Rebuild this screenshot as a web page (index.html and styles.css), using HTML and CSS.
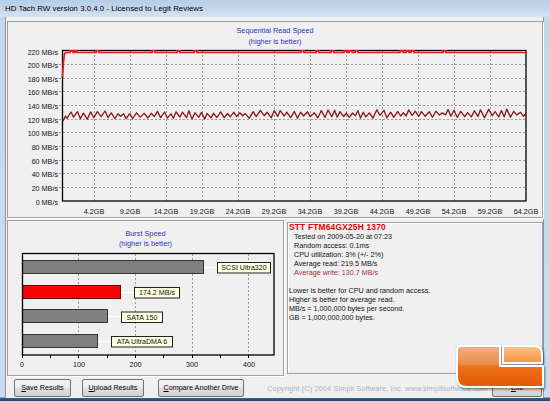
FILE: index.html
```html
<!DOCTYPE html>
<html>

<head>
    <meta content="text/html; charset=utf-8" http-equiv="Content-Type">
    <title>HD Tach RW</title>
    <link rel="stylesheet" href="styles.css">
</head>

<body>
<div class="window">
    <div class="titleBar">HD Tach RW version 3.0.4.0 - Licensed to Legit Reviews</div>
    <div class="client">
        <div class="panel readPanel">
            <div class="chartTitle">Sequential Read Speed<br>(higher is better)</div>
            <svg class="chart" width="534" height="169" viewBox="8 47 534 169">
                <g class="grid">
                    <line x1="59" y1="64.5" x2="526" y2="64.5"/>
                    <line x1="59" y1="78.5" x2="526" y2="78.5"/>
                    <line x1="59" y1="91.5" x2="526" y2="91.5"/>
                    <line x1="59" y1="105.5" x2="526" y2="105.5"/>
                    <line x1="59" y1="119.5" x2="526" y2="119.5"/>
                    <line x1="59" y1="132.5" x2="526" y2="132.5"/>
                    <line x1="59" y1="146.5" x2="526" y2="146.5"/>
                    <line x1="59" y1="160.5" x2="526" y2="160.5"/>
                    <line x1="59" y1="173.5" x2="526" y2="173.5"/>
                    <line x1="59" y1="187.5" x2="526" y2="187.5"/>
                    <line x1="94.5" y1="51" x2="94.5" y2="201"/>
                    <line x1="130.5" y1="51" x2="130.5" y2="201"/>
                    <line x1="166.5" y1="51" x2="166.5" y2="201"/>
                    <line x1="202.5" y1="51" x2="202.5" y2="201"/>
                    <line x1="238.5" y1="51" x2="238.5" y2="201"/>
                    <line x1="274.5" y1="51" x2="274.5" y2="201"/>
                    <line x1="310.5" y1="51" x2="310.5" y2="201"/>
                    <line x1="346.5" y1="51" x2="346.5" y2="201"/>
                    <line x1="382.5" y1="51" x2="382.5" y2="201"/>
                    <line x1="418.5" y1="51" x2="418.5" y2="201"/>
                    <line x1="454.5" y1="51" x2="454.5" y2="201"/>
                    <line x1="490.5" y1="51" x2="490.5" y2="201"/>
                </g>
                <rect class="plotBox" x="62.5" y="50.5" width="463.5" height="150.5"/>
                <g class="yLabels">
                    <text x="58" y="54.6">220 MB/s</text>
                    <text x="58" y="68.1">200 MB/s</text>
                    <text x="58" y="82.1">180 MB/s</text>
                    <text x="58" y="95.1">160 MB/s</text>
                    <text x="58" y="109.1">140 MB/s</text>
                    <text x="58" y="123.1">120 MB/s</text>
                    <text x="58" y="136.1">100 MB/s</text>
                    <text x="58" y="150.1">80 MB/s</text>
                    <text x="58" y="164.1">60 MB/s</text>
                    <text x="58" y="177.1">40 MB/s</text>
                    <text x="58" y="191.1">20 MB/s</text>
                    <text x="58" y="204.6">0 MB/s</text>
                </g>
                <g class="xLabels">
                    <text x="94" y="213.6">4.2GB</text>
                    <text x="130" y="213.6">9.2GB</text>
                    <text x="166" y="213.6">14.2GB</text>
                    <text x="202" y="213.6">19.2GB</text>
                    <text x="238" y="213.6">24.2GB</text>
                    <text x="274" y="213.6">29.2GB</text>
                    <text x="310" y="213.6">34.2GB</text>
                    <text x="346" y="213.6">39.2GB</text>
                    <text x="382" y="213.6">44.2GB</text>
                    <text x="418" y="213.6">49.2GB</text>
                    <text x="454" y="213.6">54.2GB</text>
                    <text x="490" y="213.6">59.2GB</text>
                    <text x="526" y="213.6">64.2GB</text>
                </g>
                <polyline class="readLine" points="62.5,77 63.5,62 64.5,53.5 66,52.5 70,52.5 70,50.8 73,50.8 73,52.5 75,52.5 75,50.8 77,50.8 77,52.5 96,52.5 96,50.8 99,50.8 99,52.5 152,52.5 152,50.8 155,50.8 155,52.5 177,52.5 177,50.8 180,50.8 180,52.5 194,52.5 194,50.8 197,50.8 197,52.5 301,52.5 301,50.8 304,50.8 304,52.5 316,52.5 316,50.8 319,50.8 319,52.5 331,52.5 331,50.8 334,50.8 334,52.5 344,52.5 344,50.8 347,50.8 347,52.5 349,52.5 349,50.8 352,50.8 352,52.5 355,52.5 355,50.8 358,50.8 358,52.5 400,52.5 400,50.8 403,50.8 403,52.5 406,52.5 406,50.8 409,50.8 409,52.5 411,52.5 411,50.8 414,50.8 414,52.5 443,52.5 443,50.8 446,50.8 446,52.5 526,52.5"/>
                <polyline id="writeLine" class="writeLine" points="63,121 526,114"/>
            </svg>
        </div>

        <div class="lowerRow">
            <div class="panel burstPanel">
                <div class="chartTitle">Burst Speed<br>(higher is better)</div>
                <svg class="chart" width="275" height="125" viewBox="8 249 275 125">
                    <g class="grid">
                        <line x1="78.5" y1="254" x2="78.5" y2="355"/>
                        <line x1="135.5" y1="254" x2="135.5" y2="355"/>
                        <line x1="192.5" y1="254" x2="192.5" y2="355"/>
                        <line x1="248.5" y1="254" x2="248.5" y2="355"/>
                    </g>
                    <g class="connectors">
                        <line x1="203" y1="267.5" x2="217" y2="267.5"/>
                        <line x1="120" y1="292.5" x2="134" y2="292.5"/>
                        <line x1="107" y1="316.5" x2="121" y2="316.5"/>
                        <line x1="97" y1="341.5" x2="111" y2="341.5"/>
                    </g>
                    <rect class="bar" x="22.5" y="260.5" width="181" height="13"/>
                    <rect class="bar current" x="22.5" y="285.5" width="98" height="13"/>
                    <rect class="bar" x="22.5" y="309.5" width="85" height="13"/>
                    <rect class="bar" x="22.5" y="334.5" width="75" height="13"/>
                    <rect class="plotBox" x="22.5" y="253.5" width="251.5" height="101.5"/>
                    <g class="ticks">
                        <line x1="22.5" y1="355" x2="22.5" y2="358"/>
                        <line x1="50.5" y1="355" x2="50.5" y2="358"/>
                        <line x1="78.5" y1="355" x2="78.5" y2="358"/>
                        <line x1="107.5" y1="355" x2="107.5" y2="358"/>
                        <line x1="135.5" y1="355" x2="135.5" y2="358"/>
                        <line x1="163.5" y1="355" x2="163.5" y2="358"/>
                        <line x1="192.5" y1="355" x2="192.5" y2="358"/>
                        <line x1="220.5" y1="355" x2="220.5" y2="358"/>
                        <line x1="248.5" y1="355" x2="248.5" y2="358"/>
                    </g>
                    <g class="tags">
                        <rect x="217.5" y="262.5" width="53" height="10.5"/>
                        <text x="244" y="270.4">SCSI Ultra320</text>
                        <rect x="134.5" y="287.5" width="45" height="10.5"/>
                        <text x="157" y="295.4">174.2 MB/s</text>
                        <rect x="121.5" y="312" width="41" height="10.5"/>
                        <text x="142" y="319.9">SATA 150</text>
                        <rect x="111.5" y="336.5" width="61" height="10.5"/>
                        <text x="142" y="344.4">ATA UltraDMA 6</text>
                    </g>
                    <g class="xLabels">
                        <text x="22" y="366.6">0</text>
                        <text x="79" y="366.6">100</text>
                        <text x="135.5" y="366.6">200</text>
                        <text x="192" y="366.6">300</text>
                        <text x="249" y="366.6">400</text>
                    </g>
                </svg>
            </div>

            <div class="infoPanel">
                <div class="driveName">STT FTM64GX25H 1370</div>
                <div class="stats">
                    <div>Tested on 2009-05-20 at 07:23</div>
                    <div>Random access: 0.1ms</div>
                    <div>CPU utilization: 3% (+/- 2%)</div>
                    <div>Average read: 219.5 MB/s</div>
                    <div class="writeText">Average write: 130.7 MB/s</div>
                </div>
                <div class="notes">
                    <div>Lower is better for CPU and random access.</div>
                    <div>Higher is better for average read.</div>
                    <div>MB/s = 1,000,000 bytes per second.</div>
                    <div>GB = 1,000,000,000 bytes.</div>
                </div>
            </div>
        </div>

        <div class="buttonRow">
            <div class="button saveButton"><u>S</u>ave Results</div>
            <div class="button uploadButton"><u>U</u>pload Results</div>
            <div class="button compareButton"><u>C</u>ompare Another Drive</div>
            <div class="copyright">Copyright (C) 2004 Simpli Software, Inc. www.simplisoftware.com</div>
            <div class="button exitButton"><u>E</u>xit</div>
        </div>
    </div>

    <svg class="logo" width="96" height="52" viewBox="0 0 96 52">
        <defs>
            <linearGradient id="logoMain" x1="0" y1="0" x2="0" y2="1">
                <stop offset="0" stop-color="#f0b088"/>
                <stop offset="0.44" stop-color="#ec8c48"/>
                <stop offset="0.5" stop-color="#ec7018"/>
                <stop offset="1" stop-color="#e35a00"/>
            </linearGradient>
            <linearGradient id="logoSide" x1="0" y1="0" x2="0" y2="1">
                <stop offset="0" stop-color="#fcc190"/>
                <stop offset="1" stop-color="#f6963c"/>
            </linearGradient>
            <filter id="logoShadow" x="-10%" y="-10%" width="130%" height="140%">
                <feDropShadow dx="1" dy="1.5" stdDeviation="1.3" flood-color="#000" flood-opacity="0.5"/>
            </filter>
        </defs>
        <g filter="url(#logoShadow)" stroke="#fff" stroke-width="2" stroke-linejoin="round">
            <path d="M9,4 H48 V24 H91 V45 H15 Q5,45 5,35 V8 Q5,4 9,4 Z" fill="url(#logoMain)"/>
            <path d="M51,4 H82 Q90,4 90,12 V21 H51 Z" fill="url(#logoSide)"/>
        </g>
    </svg>
</div>
<script>
  // average write trace, jittered around 130 MB/s
  var seed = 11;

  function rnd() {
    seed = (seed * 9301 + 49297) % 233280;
    return seed / 233280;
  }

  var points = ['63,121', '65.5,116'];
  var high = false;
  for (var x = 67; x < 525; x += 2.4 + rnd() * 1.8) {
    var drift = (x - 62) / 464 * 2;
    var y = high ? 111 + rnd() * 3.5 - drift : 116.5 + rnd() * 3 - drift;
    points.push(x.toFixed(1) + ',' + y.toFixed(1));
    high = !high;
  }
  points.push('526,113');
  document.getElementById('writeLine').setAttribute('points', points.join(' '));
</script>
</body>

</html>
```

FILE: styles.css
```css
body {
    margin: 0;
    font-family: "Liberation Sans", Arial, sans-serif;
}

.window {
    position: relative;
    width: 550px;
    height: 401px;
    overflow: hidden;
    background: linear-gradient(to bottom, #c4d7ea 0, #cadcee 397px, #336582 398px, #1b4760 401px);
}

.titleBar {
    height: 17px;
    line-height: 17px;
    padding-left: 5px;
    font-size: 7.9px;
    color: #000;
    white-space: nowrap;
    background: linear-gradient(to bottom, #b5cde5, #d3e3f2);
}

.client {
    box-sizing: border-box;
    width: 537px;
    height: 381px;
    margin-left: 6px;
    padding: 4px 0 0 1px;
    background: #f0f0f0;
    box-shadow: -1px 0 0 #8597aa, 1px 0 0 #8597aa;
}

.panel {
    box-sizing: border-box;
    border: 1px solid #a0a0a0;
    box-shadow: 1px 1px 0 #fff;
}

.readPanel {
    width: 536px;
    height: 197px;
}

.chartTitle {
    padding-top: 3px;
    text-align: center;
    font-size: 7.3px;
    line-height: 11px;
    color: #3030c0;
}

.chart {
    display: block;
}

.chart text {
    font-family: "Liberation Sans", Arial, sans-serif;
    font-size: 7.2px;
    fill: #111;
}

.grid line {
    stroke: #9a9a9a;
    stroke-width: 1;
    stroke-dasharray: 2 2;
}

.plotBox {
    fill: none;
    stroke: #000;
    stroke-width: 1.3;
}

.yLabels text {
    text-anchor: end;
}

.xLabels text {
    text-anchor: middle;
}

.readLine {
    fill: none;
    stroke: #e41b1b;
    stroke-width: 1.7;
}

.writeLine {
    fill: none;
    stroke: #8b1414;
    stroke-width: 1.3;
    stroke-linejoin: round;
}

.lowerRow {
    display: flex;
    margin-top: 2px;
    height: 156px;
}

.burstPanel {
    width: 277px;
    height: 156px;
}

.burstPanel .chartTitle {
    padding-top: 8px;
    line-height: 10px;
}

.connectors line {
    stroke: #fff;
    stroke-width: 1;
}

.bar {
    fill: #808080;
    stroke: #333;
    stroke-width: 1;
}

.bar.current {
    fill: #ff0000;
    stroke: #6a0000;
}

.ticks line {
    stroke: #000;
    stroke-width: 1;
}

.tags rect {
    fill: #ffffe1;
    stroke: #222;
    stroke-width: 1;
}

.tags text {
    text-anchor: middle;
    font-size: 7.1px;
}

.infoPanel {
    box-sizing: border-box;
    width: 256px;
    height: 152px;
    margin: 2px 0 0 3px;
    padding-left: 1px;
    border: 1px solid #a0a0a0;
    box-shadow: inset 1px 1px 0 #fff;
    font-size: 7.2px;
    line-height: 9px;
    color: #111;
}

.driveName {
    font-weight: bold;
    font-size: 8.4px;
    letter-spacing: 0.2px;
    color: #e80000;
}

.stats {
    padding-left: 5px;
}

.writeText {
    color: #a03434;
}

.notes {
    margin-top: 9px;
}

.buttonRow {
    display: flex;
    align-items: center;
    height: 18px;
    margin-top: 3px;
    padding-left: 7px;
}

.button {
    box-sizing: border-box;
    flex: none;
    height: 18px;
    border: 1px solid #707070;
    border-radius: 2px;
    background: linear-gradient(to bottom, #f4f4f4, #ececec 45%, #dedede 55%, #d2d2d2);
    font-size: 7.2px;
    line-height: 16px;
    text-align: center;
    white-space: nowrap;
    color: #000;
}

.saveButton {
    width: 57px;
}

.uploadButton {
    width: 62px;
    margin-left: 11px;
}

.compareButton {
    width: 86px;
    margin-left: 14px;
}

.copyright {
    flex: none;
    margin-left: 23px;
    font-size: 7.4px;
    letter-spacing: 0.1px;
    white-space: nowrap;
    color: #a4b6ca;
}

.exitButton {
    width: 50px;
    margin-left: auto;
    margin-right: 1px;
}

.logo {
    position: absolute;
    left: 452px;
    top: 342px;
}
```
